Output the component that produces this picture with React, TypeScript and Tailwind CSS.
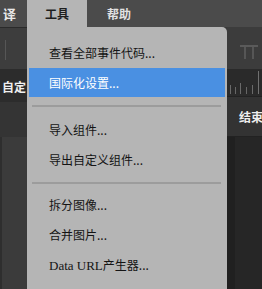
import React from "react";

const cjk = { fontFamily: '"Noto Sans CJK SC", "Noto Sans", sans-serif' };

function Item({ children, active = false, h = "h-[30px]" }: { children: React.ReactNode; active?: boolean; h?: string }) {
  return (
    <div
      className={`${h} shrink-0 mx-[2px] pl-[20px] flex items-center text-[12px] leading-none whitespace-nowrap ${
        active ? "bg-[#4a90e2] text-white" : "text-[#141414]"
      }`}
    >
      {children}
    </div>
  );
}

export default function App() {
  return (
    <div className="w-[262px] h-[289px] overflow-hidden bg-[#3a3a3a] flex flex-col" style={cjk}>
      {/* top menu bar */}
      <div className="h-[27px] shrink-0 flex bg-[#4b4b4b] text-[12px] font-bold">
        <div className="w-[27px] pl-[3px] flex items-center text-[#e8e8e8] text-[13px]">译</div>
        <div className="w-[60px] bg-[#b5b5b5] flex items-center justify-center text-[#1e1e1e]">工具</div>
        <div className="pl-[20px] flex items-center text-[#e2e2e2]">帮助</div>
      </div>

      <div className="flex flex-1 min-h-0">
        {/* left column */}
        <div className="w-[27px] shrink-0 flex flex-col">
          <div className="h-[42px] shrink-0 bg-[#3d3d3d] border-t border-[#2a2a2a] pl-[5px] pt-[12px]">
            <div className="w-px h-[20px] bg-[#565656]" />
          </div>
          <div className="h-[33px] shrink-0 bg-[#2c2c2c] pl-[2px] pt-[2px] flex items-center whitespace-nowrap text-[12px] font-bold text-[#f0f0f0]">
            自定
          </div>
          <div className="h-[35px] shrink-0 bg-[#343434]" />
          <div className="flex-1 bg-[#3b3b3b] border-l-2 border-[#2e2e2e]" />
        </div>

        {/* dropdown menu */}
        <div className="w-[200px] shrink-0 bg-[#b5b5b5] rounded-tr-[5px] pt-[11px] flex flex-col overflow-hidden">
          <Item>查看全部事件代码...</Item>
          <Item active h="h-[29px]">国际化设置...</Item>
          <div className="shrink-0 pt-[8px] pb-[8px] pl-[5px] pr-[6px]">
            <div className="h-[2px] bg-[#9c9c9c]" />
          </div>
          <Item>导入组件...</Item>
          <Item>导出自定义组件...</Item>
          <div className="shrink-0 pt-[7px] pb-[6px] pl-[5px] pr-[6px]">
            <div className="h-[2px] bg-[#9c9c9c]" />
          </div>
          <Item>拆分图像...</Item>
          <Item>合并图片...</Item>
          <Item>
            <span className="text-[13px]" style={{ fontFamily: '"Liberation Serif", "Noto Sans CJK SC", serif' }}>Data URL</span>
            <span>产生器...</span>
          </Item>
          <Item>压缩与优化...</Item>
        </div>

        {/* right column */}
        <div className="flex-1 flex flex-col min-w-0">
          <div className="h-[42px] shrink-0 bg-[#3c3c3c] pl-[13px] pt-[18px]">
            <svg width="18" height="14" viewBox="0 0 18 14">
              <rect x="0" y="0" width="18" height="2" fill="#5a5a5a" />
              <rect x="4" y="2" width="2" height="12" fill="#565656" />
              <rect x="12" y="2" width="2" height="12" fill="#565656" />
            </svg>
          </div>
          <div className="h-[27px] shrink-0 bg-[#2a2a2a]">
            <svg width="35" height="27" viewBox="0 0 35 27">
              <rect x="3" y="16" width="1" height="9" fill="#6a6a6a" />
              <rect x="8" y="18" width="1" height="7" fill="#666" />
              <rect x="13" y="14" width="1" height="11" fill="#6a6a6a" />
              <rect x="19" y="18" width="1" height="7" fill="#666" />
              <rect x="25" y="16" width="1" height="9" fill="#6a6a6a" />
              <rect x="31" y="2" width="1" height="23" fill="#707070" />
            </svg>
          </div>
          <div className="h-[41px] shrink-0 bg-[#333333] border-t border-[#222] border-b pl-[12px] flex items-center whitespace-nowrap text-[12px] font-bold text-[#eeeeee] overflow-hidden">
            结束
          </div>
          <div className="flex-1 bg-[#262626] border-l-[8px] border-[#202020]" />
        </div>
      </div>
    </div>
  );
}
